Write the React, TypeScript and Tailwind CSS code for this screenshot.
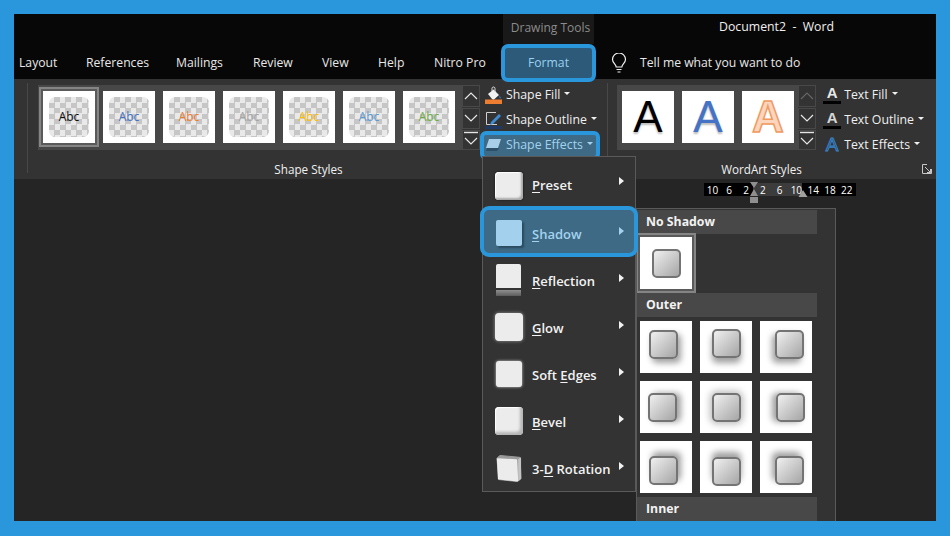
import React from "react";

const font = { fontFamily: '"Open Sans", "Noto Sans", sans-serif' };

const abc = ["text-[#111111]", "text-[#4472c4]", "text-[#ed7d31]", "text-[#a5a5a5]", "text-[#ffc000]", "text-[#5b9bd5]", "text-[#70ad47]"];

function Chevron({ up, line, dim }: { up?: boolean; line?: boolean; dim?: boolean }) {
  return (
    <svg className="shrink-0" width="18" height="22" viewBox="0 0 18 22" fill="none" stroke={dim ? "#666" : "#e6e6e6"} strokeWidth="1.2">
      {line && <path d="M2 3.5H16" strokeWidth="1.4" />}
      <path d={up ? "M3 14L9 8L15 14" : line ? "M3 9L9 15L15 9" : "M3 8L9 14L15 8"} />
    </svg>
  );
}

function Scroll({ dim }: { dim?: boolean }) {
  return (
    <div className="flex h-[65px] w-[18px] flex-col gap-px bg-[#333333]">
      <div className="flex h-[22px] items-center justify-center overflow-hidden border border-[#484848]"><Chevron up dim={dim} /></div>
      <div className="flex h-[22px] items-center justify-center overflow-hidden border border-[#484848]"><Chevron /></div>
      <div className="flex h-[20px] items-center justify-center overflow-hidden border border-[#484848]"><Chevron line /></div>
    </div>
  );
}

function Caret() {
  return <span className="mb-[3px] ml-[4px] inline-block h-0 w-0 border-x-[3px] border-t-[3px] border-x-transparent border-t-current" />;
}

function FillIcon() {
  return (
    <svg width="18" height="18" viewBox="0 0 18 18">
      <path d="M3 8L8.5 3.5L14 9L9 13.5Q8 14 7 13Z" fill="#f2f2f2" />
      <path d="M7 5V2.5A1.5 1.5 0 0 1 10 2.5V6" fill="none" stroke="#dddddd" strokeWidth="1" />
      <path d="M14.5 9.5Q16.5 11.5 15.5 12.5Q14 12.5 14.5 9.5Z" fill="#2b7fc4" />
      <rect x="0" y="13.5" width="17" height="4.5" fill="#ed7d31" />
    </svg>
  );
}

function OutlineIcon() {
  return (
    <svg width="18" height="18" viewBox="0 0 18 18">
      <path d="M1.5 1.5H11M1.5 1.5V13.5H12" fill="none" stroke="#d0d0d0" strokeWidth="1" />
      <path d="M6 11L14 3L16 5L8 13L5 14Z" fill="#3f8ad0" />
      <rect x="0" y="15" width="17" height="3" fill="#1f3864" />
    </svg>
  );
}

function EffectsIcon() {
  return (
    <svg width="18" height="16" viewBox="0 0 18 16">
      <path d="M2 11L1 14H12L14 11Z" fill="#2c5068" />
      <path d="M4 2H16L13 11H1Z" fill="#a9cfe8" />
    </svg>
  );
}

function LetterIcon({ kind }: { kind: "fill" | "outline" | "effects" }) {
  return (
    <span className="flex h-[18px] w-[18px] flex-col items-center">
      {kind === "fill" && <span className="text-[15px] font-bold leading-[14px] text-[#e8e8e8]" style={{ fontFamily: '"Liberation Sans"' }}>A</span>}
      {kind === "outline" && <span className="text-[15px] font-bold leading-[14px] text-[#d6d6d6]" style={{ fontFamily: '"Liberation Sans"' }}>A</span>}
      {kind === "effects" && <span className="text-[19px] leading-[18px] text-[#1c3a55] [-webkit-text-stroke:1px_#3b84c9]" style={{ fontFamily: '"Liberation Sans"' }}>A</span>}
      {kind !== "effects" && <span className="mt-px h-[3px] w-full bg-black" />}
    </span>
  );
}

function Cmd({ icon, label, active }: { icon: React.ReactNode; label: string; active?: boolean }) {
  return (
    <div className={"relative flex h-[25px] items-center gap-[3px] " + (active ? "text-[#a4d2ee]" : "text-[#f0f0f0]")}>
      {active && <div className="absolute left-[-5px] top-[-1px] h-[29px] w-[120px] rounded-[6px] border-[4px] border-[#2a96db] bg-[#3e6a85]" />}
      <span className="relative flex w-[18px] justify-center">{icon}</span>
      <span className="relative mt-[2px] flex items-center whitespace-nowrap text-[12.3px] leading-none">{label}<Caret /></span>
    </div>
  );
}

const menuIconBase = "h-[28px] w-[28px] bg-[#ececec]";

function MenuIcon({ kind }: { kind: string }) {
  if (kind === "preset")
    return <div className={menuIconBase + " rounded-[4px] shadow-[inset_-2px_-2px_2px_#a8a8a8,inset_1px_1px_1px_#ffffff,0_0_2px_#111111]"} />;
  if (kind === "shadow")
    return <div className="h-[26px] w-[26px] rounded-[2px] bg-[#a3d0ec] shadow-[2px_2px_2px_#2a4a60]" />;
  if (kind === "reflection")
    return (
      <div className="flex flex-col">
        <div className="h-[24px] w-[25px] rounded-t-[2px] bg-[#ececec]" />
        <div className="mt-[2px] h-[6px] w-[25px] bg-gradient-to-b from-[#8f8f8f] to-[#5c5c5c]" />
      </div>
    );
  if (kind === "glow")
    return <div className={menuIconBase + " rounded-[4px] shadow-[0_0_3px_1px_#6e6e6e]"} />;
  if (kind === "soft")
    return <div className="h-[26px] w-[26px] rounded-[3px] bg-[#ececec] shadow-[0_0_3px_#cfcfcf]" />;
  if (kind === "bevel")
    return <div className={menuIconBase + " rounded-[4px] shadow-[inset_-3px_-3px_3px_#b5b5b5,inset_1px_1px_1px_#ffffff]"} />;
  return (
    <svg width="30" height="30" viewBox="0 0 30 30" strokeLinejoin="round">
      <path d="M3 5L6 2L27 4L28 26L24 29L5 27Z" fill="#9a9a9a" stroke="#9a9a9a" strokeWidth="1" />
      <path d="M4 6L23 7L24 28L5 26Z" fill="#ececec" stroke="#ececec" strokeWidth="2" />
      <path d="M25 6L28 4L28 26L25 29Z" fill="#c4c4c4" />
    </svg>
  );
}

const menuItems: { kind: string; pre: string; key: string; post: string }[] = [
  { kind: "preset", pre: "", key: "P", post: "reset" },
  { kind: "shadow", pre: "", key: "S", post: "hadow" },
  { kind: "reflection", pre: "", key: "R", post: "eflection" },
  { kind: "glow", pre: "", key: "G", post: "low" },
  { kind: "soft", pre: "Soft ", key: "E", post: "dges" },
  { kind: "bevel", pre: "", key: "B", post: "evel" },
  { kind: "3d", pre: "3-", key: "D", post: " Rotation" },
];

function MenuRow({ item }: { item: (typeof menuItems)[number] }) {
  const active = item.kind === "shadow";
  const first = item.kind === "preset";
  return (
    <div className={"relative flex h-[47px] items-center pl-[11px] " + (active ? "text-[#a4d2ee]" : "text-[#f2f2f2]")}>
      {active && <div className="absolute left-[-3px] top-[-3px] z-10 h-[51px] w-[158px] rounded-[9px] border-[4px] border-[#2a96db] bg-[#3e6a85]" />}
      <span className="relative z-20 flex w-[29px] justify-center"><MenuIcon kind={item.kind} /></span>
      <span className={"relative z-20 ml-[9px] whitespace-pre text-[13px] font-semibold leading-none " + (first ? "" : "mt-[4px]")}>
        {item.pre}<span className="underline underline-offset-2">{item.key}</span>{item.post}
      </span>
      <span className={"absolute left-[136px] z-20 h-0 w-0 border-y-[4px] border-l-[5px] border-y-transparent border-l-current " + (first ? "top-[15px]" : "top-[18px]")} />
    </div>
  );
}

const boxClass = "h-[29px] w-[29px] rounded-[5px] border-2 border-[#747474] bg-gradient-to-br from-[#f0f0f0] to-[#a6a6a6]";

const outer = [
  "-translate-x-[3px] -translate-y-[3px] shadow-[3px_4px_6px_#a0a0a0]",
  "-translate-y-[4px] shadow-[0_5px_6px_#a0a0a0]",
  "translate-x-[3px] -translate-y-[3px] shadow-[-3px_4px_6px_#a0a0a0]",
  "-translate-x-[4px] shadow-[4px_0_6px_#a0a0a0]",
  "shadow-[0_0_7px_2px_#bbbbbb]",
  "translate-x-[4px] shadow-[-4px_0_6px_#a0a0a0]",
  "-translate-x-[3px] translate-y-[3px] shadow-[3px_-4px_6px_#a0a0a0]",
  "translate-y-[4px] shadow-[0_-5px_6px_#a0a0a0]",
  "translate-x-[3px] translate-y-[3px] shadow-[-3px_-4px_6px_#a0a0a0]",
];

function Header({ children }: { children: string }) {
  return (
    <div className="flex h-[24px] w-[180px] shrink-0 items-center bg-[#484848] pl-[9px] text-[12.3px] font-bold leading-none text-[#f2f2f2]">
      {children}
    </div>
  );
}

function ShadowThumb({ cls }: { cls: string }) {
  return (
    <div className="flex h-[52px] w-[52px] items-center justify-center bg-white">
      <div className={boxClass + " " + cls} />
    </div>
  );
}

export default function App() {
  return (
    <div style={font} className="relative flex h-[536px] w-[950px] flex-col overflow-hidden border-[14px] border-b-[15px] border-[#2a96db] bg-[#252525]">
      {/* Title row */}
      <div className="flex h-[30px] shrink-0 bg-[#070707]">
        <div className="ml-[489px] flex h-full w-[91px] items-center justify-center bg-[#191919] pb-[2px] pl-[4px] text-[12px] text-[#8c8c8c]">Drawing Tools</div>
        <div className="ml-[125px] flex h-full items-center whitespace-pre pb-[4px] text-[12.3px] text-[#f0f0f0]">Document2  -  Word</div>
      </div>

      {/* Tabs */}
      <div className="flex h-[35px] shrink-0 items-center bg-[#070707] pl-[5px] text-[12.2px] text-[#e8e8e8]">
        <span className="mt-[4px] w-[67px]">Layout</span>
        <span className="mt-[4px] w-[90px]">References</span>
        <span className="mt-[4px] w-[77px]">Mailings</span>
        <span className="mt-[4px] w-[69px]">Review</span>
        <span className="mt-[4px] w-[56px]">View</span>
        <span className="mt-[4px] w-[56px]">Help</span>
        <span className="mt-[4px] w-[67px] whitespace-nowrap">Nitro Pro</span>
        <div className="relative z-30 -mb-[3px] flex h-[38px] w-[95px] items-center justify-center rounded-[7px] border-[4px] border-[#2a96db] bg-[#2c5a78] text-[#9bd0ef]">Format</div>
        <svg className="ml-[15px] mt-[2px]" width="16" height="20" viewBox="0 0 16 20" fill="none" stroke="#f0f0f0" strokeWidth="1.2">
          <path d="M5.2 14C5 11 1.5 10 1.5 6.5A6.5 6.5 0 0 1 14.5 6.5C14.5 10 11 11 10.8 14Z" />
          <path d="M5.5 16.5H10.5M6.5 19H9.5" />
        </svg>
        <span className="ml-[13px] mt-[4px] whitespace-nowrap">Tell me what you want to do</span>
      </div>

      {/* Ribbon */}
      <div className="flex h-[100px] shrink-0 bg-[#333333] text-[#f0f0f0]">
        <div className="ml-[13px] mt-[4px] h-[90px] w-px bg-[#484848]" />

        <div className="flex w-[579px] flex-col">
          <div className="flex h-[78px] pl-[10px] pt-[6px]">
            <div className="flex h-[65px] w-[424px] gap-[8px] bg-[#474747] pl-[5px] pt-[6px]">
              {abc.map((c, i) => (
                <div key={c} className={"flex h-[52px] w-[52px] items-center justify-center bg-white " + (i === 0 ? "shadow-[0_0_0_2px_#5a5a5a,0_0_0_4px_#858585]" : "")}>
                  <div className="flex h-[40px] w-[40px] items-center justify-center rounded-[6px] bg-[repeating-conic-gradient(#c6c6c6_0_25%,#e9e9e9_0_50%)] bg-[length:11px_11px]">
                    <span className={"text-[12px] leading-none " + c}>Abc</span>
                  </div>
                </div>
              ))}
            </div>
            <Scroll />
            <div className="ml-[5px] -mt-[3px] flex flex-col">
              <Cmd icon={<FillIcon />} label="Shape Fill" />
              <Cmd icon={<OutlineIcon />} label="Shape Outline" />
              <Cmd icon={<EffectsIcon />} label="Shape Effects" active />
            </div>
          </div>
          <div className="mt-[5px] pr-[18px] text-center text-[11.7px] leading-[14px]">Shape Styles</div>
        </div>

        <div className="mt-[4px] h-[90px] w-px bg-[#484848]" />

        <div className="relative flex w-[316px] flex-col">
          <div className="flex h-[78px] pl-[9px] pt-[6px]">
            <div className="flex h-[65px] w-[183px] gap-[8px] bg-[#474747] pl-[5px] pt-[6px]">
              <div className="flex h-[52px] w-[52px] items-center justify-center bg-white text-[44px] leading-none text-black [text-shadow:0_2px_2px_#bbbbbb]" style={{ fontFamily: '"Liberation Sans"' }}>A</div>
              <div className="flex h-[52px] w-[52px] items-center justify-center bg-white text-[44px] leading-none text-[#4472c4] [-webkit-text-stroke:0.2px_#4472c4] [text-shadow:0_2px_2px_#bbbbbb]" style={{ fontFamily: '"Liberation Sans"' }}>A</div>
              <div className="flex h-[52px] w-[52px] items-center justify-center bg-white text-[44px] font-bold leading-none text-[#fbd5bd] [-webkit-text-stroke:1.5px_#f09a5f]" style={{ fontFamily: '"Liberation Sans"' }}>A</div>
            </div>
            <Scroll dim />
            <div className="ml-[7px] -mt-[3px] flex flex-col">
              <Cmd icon={<LetterIcon kind="fill" />} label="Text Fill" />
              <Cmd icon={<LetterIcon kind="outline" />} label="Text Outline" />
              <Cmd icon={<LetterIcon kind="effects" />} label="Text Effects" />
            </div>
          </div>
          <div className="mt-[5px] pr-[9px] text-center text-[11.7px] leading-[14px]">WordArt Styles</div>
          <svg className="absolute left-[314px] top-[85px]" width="10" height="10" viewBox="0 0 10 10" fill="none" stroke="#c8c8c8" strokeWidth="1">
            <path d="M5 .5H.5V9.5H9.5V5M3 3L8.5 8.5M8.5 5V8.5H5" />
          </svg>
        </div>
      </div>

      {/* Ruler */}
      <div className="relative ml-[690px] mt-[4px] flex h-[13px] w-[152px] items-center bg-[linear-gradient(90deg,#000000_49px,#3c3c3c_49px,#3c3c3c_98px,#000000_98px)] text-[10px] leading-none text-white">
        {["10", "6", "2", "2", "6", "10", "14", "18", "22"].map((n, i) => (
          <span key={i} className="w-[16.8px] shrink-0 text-center">{n}</span>
        ))}
        <svg className="absolute left-[45px] top-[-1px]" width="10" height="22" viewBox="0 0 10 22" fill="#8f8f8f">
          <path d="M1 0H9L5 6ZM5 7L9 14H1Z" />
          <rect x="1" y="15" width="8" height="6" />
        </svg>
        <svg className="absolute left-[94px] top-[7px]" width="10" height="7" viewBox="0 0 10 7" fill="#a0a0a0">
          <path d="M5 0L9.5 7H.5Z" />
        </svg>
      </div>

      {/* Shape Effects menu */}
      <div className="absolute left-[468px] top-[142px] z-20 flex h-[336px] w-[154px] flex-col border border-[#5a5a5a] bg-[#333333] pt-[5px]">
        {menuItems.map((m) => <MenuRow key={m.kind} item={m} />)}
      </div>

      {/* Shadow flyout */}
      <div className="absolute left-[622px] top-[194px] z-10 flex h-[320px] w-[200px] flex-col overflow-hidden border border-[#5a5a5a] bg-[#333333] pt-px">
        <Header>No Shadow</Header>
        <div className="ml-[3px] mt-[3px] h-[52px] w-[52px] shrink-0 shadow-[0_0_0_2px_#5a5a5a,0_0_0_4px_#858585]">
          <ShadowThumb cls="" />
        </div>
        <div className="mt-[4px] shrink-0"><Header>Outer</Header></div>
        <div className="ml-[3px] mt-[4px] grid w-[172px] shrink-0 grid-cols-3 gap-[8px]">
          {outer.map((c) => <ShadowThumb key={c} cls={c} />)}
        </div>
        <div className="mt-[4px] shrink-0"><Header>Inner</Header></div>
      </div>
    </div>
  );
}
